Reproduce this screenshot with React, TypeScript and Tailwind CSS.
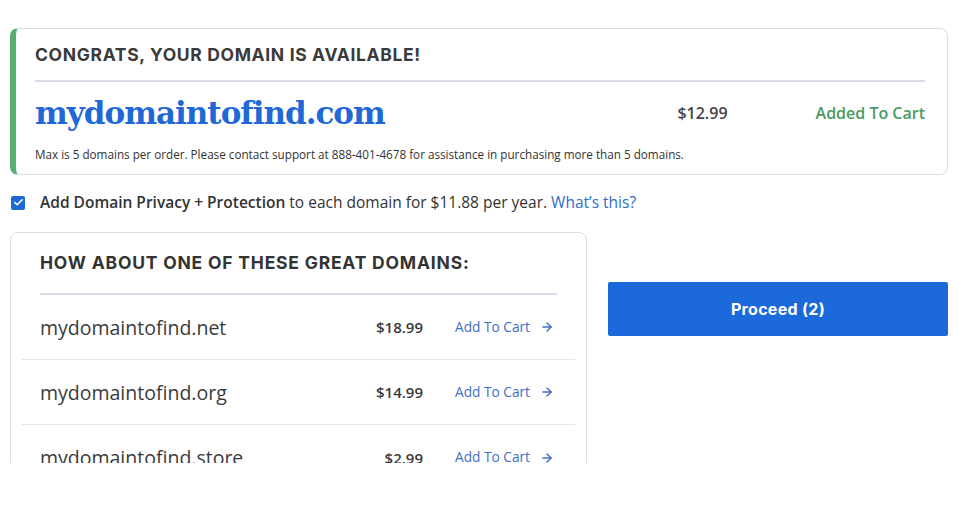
import React from "react";
import { ArrowRight, Check } from "lucide-react";

const headFont = "font-['Inter','Noto_Sans',sans-serif]";
const bodyFont = "font-['Open_Sans','Noto_Sans',sans-serif]";

const suggestions = [
    { name: "mydomaintofind.net", price: "$18.99" },
    { name: "mydomaintofind.org", price: "$14.99" },
    { name: "mydomaintofind.store", price: "$2.99" },
];

const SuggestionRow: React.FC<{ name: string; price: string; last?: boolean }> = ({ name, price, last }) => (
    <div className={`flex items-center h-[65px] mx-[11px] pl-[18px] pr-[21px] ${last ? "" : "border-b border-[#e4e5e9]"}`}>
        <span className="flex-1 text-[19.5px] text-[#3b3b3b]">{name}</span>
        <span className="text-[15px] font-semibold text-[#3a3a3a] text-right">{price}</span>
        <span className="ml-[32px] flex items-center gap-[10px] text-[13.7px] text-[#3e6fc4]">
            Add To Cart
            <ArrowRight size={14} strokeWidth={2.5} />
        </span>
    </div>
);

export default function App() {
    return (
        <div className={`h-[463px] overflow-hidden bg-white ${bodyFont} text-[#333]`}>
            <div className="pt-[28px] px-[10px] w-[958px]">
                <div className="border border-[#dcdde2] border-l-[6px] border-l-[#5aad72] rounded-[8px] pl-[19px] pr-[22px] pt-[14px] pb-[12px]">
                    <h2 className={`${headFont} font-bold text-[17.5px] text-[#3a3a3a] tracking-[0.65px] leading-[24px]`}>
                        CONGRATS, YOUR DOMAIN IS AVAILABLE!
                    </h2>
                    <div className="h-[2px] bg-[#d8dbe5] mt-[13px]" />
                    <div className="flex items-center mt-[9px]">
                        <span className="flex-1 font-['DejaVu_Serif',serif] font-bold text-[31px] text-[#1f68d6] tracking-[-1px] leading-[44px]">
                            mydomaintofind.com
                        </span>
                        <span className="text-[16px] font-semibold text-[#444]">$12.99</span>
                        <span className="ml-[88px] text-[16px] font-semibold text-[#4a9a62]">Added To Cart</span>
                    </div>
                    <p className="text-[11.7px] text-[#333] mt-[11px] leading-[16px]">
                        Max is 5 domains per order. Please contact support at 888-401-4678 for assistance in purchasing more than 5 domains.
                    </p>
                </div>

                <label className="flex items-center mt-[16px] ml-[1px] text-[15.5px] text-[#333]">
                    <span className="w-[14px] h-[14px] rounded-[2px] bg-[#1d6ad7] flex items-center justify-center">
                        <Check size={11} strokeWidth={3.5} className="text-white" />
                    </span>
                    <span className="ml-[15px]">
                        <span className="font-semibold">Add Domain Privacy + Protection</span> to each domain for $11.88 per year.{" "}
                        <span className="text-[#2f6ecb]">What’s this?</span>
                    </span>
                </label>

                <div className="flex items-start mt-[18px] gap-[21px]">
                    <div className="w-[577px] border border-[#dcdde2] rounded-[8px] pt-[18px]">
                        <h3 className={`${headFont} font-bold text-[17.5px] text-[#333] px-[29px] tracking-[0.8px] leading-[24px]`}>
                            HOW ABOUT ONE OF THESE GREAT DOMAINS:
                        </h3>
                        <div className="h-[2px] bg-[#d8dbe5] mt-[18px] mx-[29px]" />
                        {suggestions.map((s, i) => (
                            <SuggestionRow key={s.name} name={s.name} price={s.price} last={i === suggestions.length - 1} />
                        ))}
                    </div>
                    <button className={`${headFont} mt-[50px] w-[340px] h-[54px] bg-[#1b69db] rounded-[2px] text-white font-bold text-[16px] tracking-[0.3px]`}>
                        Proceed (2)
                    </button>
                </div>
            </div>
        </div>
    );
}
